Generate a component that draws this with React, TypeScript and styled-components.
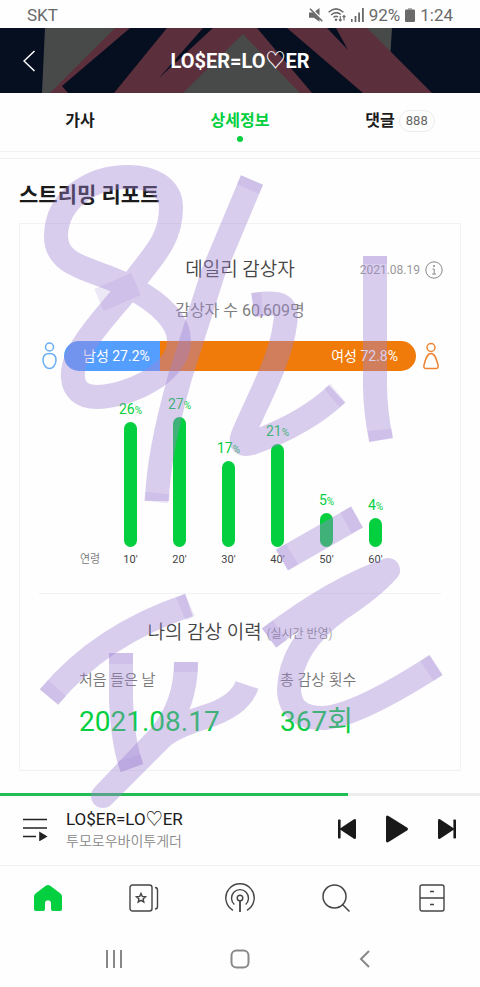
import React from "react";
import styled, { createGlobalStyle } from "styled-components";

const GlobalStyle = createGlobalStyle`
  * { box-sizing: border-box; }
  body {
    margin: 0;
    background: #fefefe;
    color: #1b1b1b;
    font-family: Roboto, "Noto Sans CJK KR", sans-serif;
  }
  button { font: inherit; color: inherit; background: none; border: 0; padding: 0; cursor: pointer; }
  svg { display: block; }
`;

const GREEN = "#03cf3f";

const Page = styled.div`
  position: relative;
  display: flex;
  flex-direction: column;
  overflow: hidden;
`;

const StatusBar = styled.div`
  display: flex;
  align-items: center;
  justify-content: space-between;
  height: 28px;
  padding: 2px 27px 0;
  font-size: 17px;
  color: #6a6a6a;
`;

const StatusGroup = styled.div`
  display: flex;
  align-items: center;
  gap: 5px;
`;

const Header = styled.header`
  position: relative;
  display: grid;
  grid-template-columns: 60px 1fr 60px;
  align-items: center;
  height: 65px;
  background: #060f20;
  color: #fff;
`;

const HeaderArt = styled.svg`
  position: absolute;
  inset: 0;
  width: 100%;
  height: 100%;
`;

const BackButton = styled.button`
  position: relative;
  padding-left: 23px;
`;

const SongHeading = styled.h1`
  position: relative;
  margin: 0;
  text-align: center;
  font-size: 20px;
  font-weight: 700;
  line-height: 28px;
`;

const Tabs = styled.nav`
  display: grid;
  grid-template-columns: repeat(3, 1fr);
  height: 59px;
  border-bottom: 1px solid #f2f2f2;
`;

const Tab = styled.button<{ $active?: boolean }>`
  display: flex;
  flex-direction: column;
  align-items: center;
  padding-top: 15px;
  font-size: 16px;
  font-weight: 700;
  line-height: 26px;
  color: ${(p) => (p.$active ? GREEN : "#1b1b1b")};
  &::after {
    content: "";
    width: 6px;
    height: 6px;
    margin-top: 2px;
    border-radius: 50%;
    background: ${(p) => (p.$active ? GREEN : "transparent")};
  }
`;

const TabLabel = styled.span`
  display: flex;
  align-items: center;
  gap: 4px;
`;

const Count = styled.span`
  padding: 0 6px;
  border: 1px solid #ececec;
  border-radius: 11px;
  font-size: 13px;
  font-weight: 400;
  line-height: 20px;
  color: #666;
`;

const Report = styled.main`
  margin-top: 6px;
  padding: 21px 19px 22px;
  border-top: 1px solid #f2f2f2;
`;

const SectionTitle = styled.h2`
  margin: 0 0 13px;
  font-size: 21px;
  font-weight: 700;
  line-height: 30px;
`;

const Card = styled.section`
  border: 1px solid #f2f2f2;
  padding-bottom: 28px;
`;

const CardHead = styled.div`
  display: grid;
  grid-template-columns: 1fr auto 1fr;
  align-items: center;
  padding: 32px 17px 0;
`;

const CardTitle = styled.h3`
  grid-column: 2;
  margin: 0;
  font-size: 19px;
  font-weight: 350;
  line-height: 28px;
  color: #444;
`;

const DateInfo = styled.div`
  display: flex;
  align-items: center;
  justify-content: flex-end;
  gap: 5px;
  font-size: 12px;
  color: #999;
`;

const Listeners = styled.p`
  margin: 14px 0 17px;
  text-align: center;
  font-size: 16px;
  line-height: 26px;
  color: #808080;
`;

const GenderRow = styled.div`
  display: flex;
  align-items: center;
  gap: 5px;
  padding: 0 21px;
`;

const GenderBar = styled.div`
  display: flex;
  flex: 1;
  height: 30px;
  border-radius: 15px;
  overflow: hidden;
  font-size: 14px;
  line-height: 30px;
  color: #fff;
`;

const GenderPart = styled.div<{ $female?: boolean }>`
  padding: ${(p) => (p.$female ? "0 18px 0 0" : "0 0 0 19px")};
  text-align: ${(p) => (p.$female ? "right" : "left")};
  white-space: nowrap;
  background: ${(p) => (p.$female ? "#f07a0a" : "#549eff")};
`;

const Chart = styled.div`
  display: flex;
  align-items: flex-end;
  height: 197px;
  padding: 0 60px;
  font-size: 11px;
  line-height: 16px;
`;

const AxisName = styled.span`
  width: 26px;
  font-weight: 350;
  color: #777;
`;

const Column = styled.div`
  display: flex;
  flex: 1;
  flex-direction: column;
  align-items: center;
  color: #444;
`;

const Percent = styled.span`
  font-size: 14px;
  line-height: 22px;
  color: ${GREEN};
  small { font-size: 10px; }
`;

const Bar = styled.div`
  width: 13px;
  margin-bottom: 5px;
  border-radius: 7px;
  background: ${GREEN};
`;

const Divider = styled.hr`
  height: 1px;
  margin: 25px 19px;
  border: 0;
  background: #f2f2f2;
`;

const HistoryTitle = styled.h3`
  margin: 0 0 20px;
  text-align: center;
  font-size: 19px;
  font-weight: 350;
  line-height: 28px;
  color: #444;
  small { margin-left: 5px; font-size: 12px; color: #888; vertical-align: 1px; }
`;

const History = styled.dl`
  display: grid;
  grid-template-columns: 201fr 180fr;
  margin: 0;
  padding-left: 59px;
`;

const Term = styled.dt`
  font-size: 15px;
  font-weight: 350;
  line-height: 24px;
  color: #777;
`;

const Value = styled.dd`
  margin: 10px 0 0;
  font-size: 28px;
  line-height: 40px;
  color: ${GREEN};
`;

const Progress = styled.div`
  height: 3px;
  background: #ededed;
`;

const ProgressFill = styled.div`
  height: 100%;
  background: #22bd54;
`;

const Player = styled.section`
  display: flex;
  align-items: center;
  height: 69px;
  padding: 0 24px 4px 21px;
`;

const Track = styled.div`
  flex: 1;
  padding-left: 17px;
`;

const TrackTitle = styled.div`
  font-size: 17px;
  line-height: 24px;
`;

const Artist = styled.div`
  font-size: 14px;
  font-weight: 350;
  line-height: 20px;
  color: #888;
`;

const Controls = styled.div`
  display: flex;
  align-items: center;
  gap: 29px;
  color: #191919;
`;

const BottomNav = styled.nav`
  display: grid;
  grid-template-columns: repeat(5, 1fr);
  height: 65px;
  border-top: 1px solid #f2f2f2;
`;

const NavButton = styled.button<{ $active?: boolean }>`
  display: grid;
  place-items: center;
  color: ${(p) => (p.$active ? GREEN : "#444")};
`;

const SystemNav = styled.nav`
  display: flex;
  justify-content: space-between;
  align-items: center;
  height: 57px;
  padding: 0 104px;
  color: #888;
`;

const Marker = styled.svg`
  position: absolute;
  top: 0;
  left: 0;
  width: 100%;
  fill: none;
  stroke: #a084d4;
  stroke-width: 24px;
  stroke-linejoin: round;
  pointer-events: none;
`;

const ages = [
  { age: "10'", value: 26, height: 125 },
  { age: "20'", value: 27, height: 130 },
  { age: "30'", value: 17, height: 86 },
  { age: "40'", value: 21, height: 103 },
  { age: "50'", value: 5, height: 34 },
  { age: "60'", value: 4, height: 29 },
];

const markerStrokes = [
  "M56 235C55 268 94 268 130 287C160 303 180 322 179 342C178 375 125 397 97 397C65 397 69 365 85 343C100 320 118 303 135 280C152 257 171 240 171 208C171 186 150 177 128 177C90 177 57 200 56 235Z",
  "M252 180L213 273L180 377Q158 455 157 501",
  "M253 305C278 301 289 303 285 324C281 360 255 405 243 435Q238 447 252 443Q305 424 337 394",
  "M375 256V385Q375 410 381 440",
  "M282 560L357 517",
  "M269 638Q335 588 388 570Q372 588 340 609Q290 645 289 690Q290 719 325 718Q360 714 436 665",
  "M49 697Q100 635 189 605",
  "M121 653V700Q123 745 132 768",
  "M186 662Q186 705 160 736L103 796L160 739Q170 728 205 717Q240 706 247 685",
];

const markerEnds = [
  "M99 300L136 284",
  "M157 493L156 502",
  "M181 609L190 605",
  "M49 697L57 688",
  "M121 653V664",
  "M186 662V672",
  "M129 758L132 768",
  "M252 180L248 189",
  "M375 256V264",
  "M380 430L381 440",
  "M332 398L338 393",
  "M253 305L262 304",
  "M282 560L292 554",
  "M346 523L357 517",
  "M269 638L280 630",
  "M427 671L436 665",
];

function Skip({ flip }: { flip?: boolean }) {
  return (
    <svg width="18" height="20" viewBox="0 0 18 20" fill="currentColor">
      <g transform={flip ? "translate(18 0) scale(-1 1)" : undefined}>
        <rect x="0" y="0.5" width="2.6" height="19" rx="0.8" />
        <path d="M2.4 9.2 16 0.3Q18 -.4 18 1.4V18.6Q18 20.4 16 19.7L2.4 10.8Q1.2 10 2.4 9.2Z" />
      </g>
    </svg>
  );
}

export default function App() {
  return (
    <Page>
      <GlobalStyle />
      <StatusBar>
        <span>SKT</span>
        <StatusGroup>
          <svg width="14" height="14" viewBox="0 0 14 14" fill="currentColor">
            <path d="M0 4.500H4L10.500 11V13.800L5 9.800H0ZM10.500 0V7.500L6.200 3.200Z" />
            <path d="M1 .8 13.300 13.200" stroke="currentColor" strokeWidth="1.600" />
          </svg>
          <svg width="18" height="14" viewBox="0 0 18 14" fill="none" stroke="currentColor" strokeWidth="1.5">
            <path d="M.6 4.3Q8 -2.6 15.4 4.3M3 7Q8 2.5 12.8 6.5M5.5 9.4Q8 7.2 10 9" />
            <circle cx="8" cy="11.8" r="1.2" fill="currentColor" stroke="none" />
            <path d="M12.3 8V13M10.8 11.4 12.3 13 13.8 11.4M16 12.5V7.5M14.6 9 16 7.5 17.4 9" strokeWidth="1.1" />
          </svg>
          <svg width="13" height="14" viewBox="0 0 13 14" fill="currentColor">
            <path d="M0 11h1.6v3H0ZM3.6 8h1.8v6H3.6ZM7.2 4.5H9V14H7.2ZM11 0h1.8v14H11Z" />
          </svg>
          <span>92%</span>
          <svg width="10" height="14" viewBox="0 0 10 14" fill="currentColor">
            <path d="M3 0h4v2H3Z" opacity=".5" />
            <rect y="1.5" width="10" height="12.5" rx="1" />
          </svg>
          <span>1:24</span>
        </StatusGroup>
      </StatusBar>

      <Header>
        <HeaderArt viewBox="0 0 480 65" preserveAspectRatio="none">
          <path fill="#474a49" d="M45 0H392L388 65H42Z" />
          <path fill="#5c2f3c" d="M115 0H249L183 65H50ZM237 0H367L432 65H300Z" />
          <path fill="#060f20" d="M130 0H167L114 65H68L62 58ZM203 0H213L159 50ZM257 0H287L363 65H312ZM327 0H336L348 22Z" />
        </HeaderArt>
        <BackButton aria-label="뒤로">
          <svg width="13" height="22" viewBox="0 0 13 22" fill="none" stroke="currentColor" strokeWidth="1.5">
            <path d="M11.5 1 1 11 11.5 21" />
          </svg>
        </BackButton>
        <SongHeading>LO$ER=LO♡ER</SongHeading>
      </Header>

      <Tabs>
        <Tab>가사</Tab>
        <Tab $active>상세정보</Tab>
        <Tab><TabLabel>댓글 <Count>888</Count></TabLabel></Tab>
      </Tabs>

      <Report>
        <SectionTitle>스트리밍 리포트</SectionTitle>
        <Card>
          <CardHead>
            <CardTitle>데일리 감상자</CardTitle>
            <DateInfo>
              2021.08.19
              <svg width="18" height="18" viewBox="0 0 18 18" fill="none" stroke="#888">
                <circle cx="9" cy="9" r="8.2" />
                <path d="M7.5 8H9.2V13M7.2 13H11" />
                <circle cx="9" cy="5" r="1" fill="#888" stroke="none" />
              </svg>
            </DateInfo>
          </CardHead>
          <Listeners>감상자 수 60,609명</Listeners>
          <GenderRow>
            <svg width="18" height="28" viewBox="0 0 18 28" fill="none" stroke="#6aaef5" strokeWidth="1.5">
              <circle cx="8.5" cy="5" r="4" />
              <path d="M8.5 11.5C4 11.5 2 14.5 2 18S4.5 26.5 8.5 26.5 15 21.500 15 18 13 11.500 8.500 11.500Z" />
            </svg>
            <GenderBar>
              <GenderPart style={{ width: "27.2%" }}>남성 27.2%</GenderPart>
              <GenderPart $female style={{ width: "72.8%" }}>여성 72.8%</GenderPart>
            </GenderBar>
            <svg width="18" height="28" viewBox="0 0 18 28" fill="none" stroke="#ee8433" strokeWidth="1.5">
              <circle cx="10" cy="5.500" r="4" />
              <path d="M10 11.500C6 11.500 4.500 17 3 23Q2.300 26.500 5 26.500H15Q17.700 26.500 17 23C15.500 17 14 11.500 10 11.500Z" />
            </svg>
          </GenderRow>
          <Chart>
            <AxisName>연령</AxisName>
            {ages.map((a) => (
              <Column key={a.age}>
                <Percent>{a.value}<small>%</small></Percent>
                <Bar style={{ height: a.height }} />
                <span>{a.age}</span>
              </Column>
            ))}
          </Chart>
          <Divider />
          <HistoryTitle>나의 감상 이력<small>(실시간 반영)</small></HistoryTitle>
          <History>
            <div>
              <Term>처음 들은 날</Term>
              <Value>2021.08.17</Value>
            </div>
            <div>
              <Term>총 감상 횟수</Term>
              <Value>367회</Value>
            </div>
          </History>
        </Card>
      </Report>

      <Progress><ProgressFill style={{ width: "72.500%" }} /></Progress>
      <Player>
        <button aria-label="재생목록">
          <svg width="28" height="24" viewBox="0 0 28 24" fill="none" stroke="#222" strokeWidth="1.6">
            <path d="M2 2.500H26M2 11H26M2 19.500H15" />
            <path d="M19 16 25 19.500 19 23Z" fill="#222" />
          </svg>
        </button>
        <Track>
          <TrackTitle>LO$ER=LO♡ER</TrackTitle>
          <Artist>투모로우바이투게더</Artist>
        </Track>
        <Controls>
          <button aria-label="이전 곡"><Skip /></button>
          <button aria-label="재생">
            <svg width="24" height="28" viewBox="0 0 24 28" fill="currentColor">
              <path d="M1 2.500Q1 -.3 3.500 1L22 12.400Q24 14 22 15.600L3.500 27Q1 28.300 1 25.500Z" />
            </svg>
          </button>
          <button aria-label="다음 곡"><Skip flip /></button>
        </Controls>
      </Player>

      <BottomNav>
        <NavButton $active aria-label="홈">
          <svg width="30" height="28" viewBox="0 0 30 28" fill="currentColor">
            <path d="M12.800 1.800Q15 .2 17.200 1.800L27.500 9.500Q29 10.800 29 12.500V25Q29 27 27 27H20Q18 27 18 25V19C18 15.200 12 15.200 12 19V25Q12 27 10 27H3Q1 27 1 25V12.500Q1 10.800 2.500 9.500Z" />
          </svg>
        </NavButton>
        <NavButton aria-label="보관">
          <svg width="30" height="28" viewBox="0 0 30 28" fill="none" stroke="currentColor" strokeWidth="1.400">
            <rect x="1" y="1" width="22" height="26" rx="2.500" />
            <path d="M26 3.500Q28.500 3.500 28.500 6V22.500Q28.500 25 26 25" />
            <path d="M12 9.500 13.300 12.400 16.500 12.700 14.100 14.900 14.800 18 12 16.400 9.200 18 9.900 14.900 7.500 12.700 10.700 12.400Z" />
          </svg>
        </NavButton>
        <NavButton aria-label="라디오">
          <svg width="30" height="30" viewBox="0 0 30 30" fill="none" stroke="currentColor" strokeWidth="1.400">
            <path d="M8 27.300A14.200 14.200 0 1 1 22 27.300" />
            <path d="M9.400 21.500A8.500 8.500 0 1 1 20.600 21.500" />
            <circle cx="15" cy="15" r="2.800" />
            <path d="M15 18V29" strokeWidth="1.800" />
          </svg>
        </NavButton>
        <NavButton aria-label="검색">
          <svg width="30" height="28" viewBox="0 0 30 28" fill="none" stroke="currentColor" strokeWidth="1.500">
            <circle cx="13.500" cy="12.500" r="11.500" />
            <path d="M21.500 20.500 28.500 27.500" />
          </svg>
        </NavButton>
        <NavButton aria-label="보관함">
          <svg width="26" height="28" viewBox="0 0 26 28" fill="none" stroke="currentColor" strokeWidth="1.400">
            <rect x="1" y="1" width="24" height="26" rx="2" />
            <path d="M1 14H25M11 7.500H15M11 20.500H15" />
          </svg>
        </NavButton>
      </BottomNav>

      <SystemNav>
        <button aria-label="최근 앱">
          <svg width="20" height="18" viewBox="0 0 20 18" stroke="currentColor" strokeWidth="2">
            <path d="M3 0V18M10 0V18M17 0V18" />
          </svg>
        </button>
        <button aria-label="홈 화면">
          <svg width="20" height="20" viewBox="0 0 20 20" fill="none" stroke="currentColor" strokeWidth="2">
            <rect x="1.500" y="1.500" width="17" height="17" rx="5" />
          </svg>
        </button>
        <button aria-label="이전 화면">
          <svg width="20" height="18" viewBox="0 0 20 18" fill="none" stroke="currentColor" strokeWidth="2">
            <path d="M13 1 5 9 13 17" />
          </svg>
        </button>
      </SystemNav>

      <Marker viewBox="0 0 480 987" aria-hidden="true">
        {markerStrokes.map((d) => <path key={d} d={d} opacity=".4" />)}
        {markerEnds.map((d) => <path key={d} d={d} opacity=".18" />)}
      </Marker>
    </Page>
  );
}
